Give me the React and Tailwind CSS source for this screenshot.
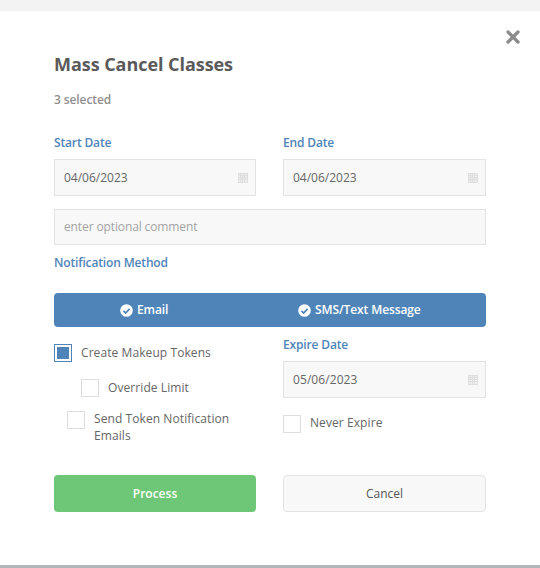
import { X } from 'lucide-react';

const CalIcon = () => (
    <svg width="10" height="10" viewBox="0 0 10 10" className="shrink-0" fill="#f0f0f0" stroke="#dedede" strokeWidth="1" shapeRendering="crispEdges">
        <rect x="0.5" y="0.5" width="9" height="9" />
        <path d="M2.5 0v10M4.5 0v10M6.5 0v10M0 2.5h10M0 4.5h10M0 6.5h10" fill="none" />
    </svg>
);

const CheckCircle = () => (
    <svg width="13" height="13" viewBox="0 0 13 13" className="shrink-0">
        <circle cx="6.5" cy="6.5" r="6.3" fill="#ffffff" />
        <path d="M3.4 6.8l2.2 2.2 4-4.2" fill="none" stroke="#4f84b8" strokeWidth="1.7" />
    </svg>
);

const DateField = ({ value }) => (
    <div className="flex items-center justify-between h-[37px] bg-[#f8f8f8] border border-[#e3e3e3] pl-[9px] pr-[7px] text-[12px] text-[#666666]">
        <span>{value}</span>
        <CalIcon />
    </div>
);

const Label = ({ children, className = '' }) => (
    <label className={`block text-[12px] leading-[16px] font-semibold tracking-[-0.15px] text-[#4f84b8] ${className}`}>{children}</label>
);

const Box = () => <span className="block shrink-0 w-[18px] h-[18px] bg-white border border-[#dddddd]" />;

const App = () => {
    return (
        <div className="w-[540px] h-[568px] flex flex-col overflow-hidden bg-white" style={{ fontFamily: '"Open Sans", sans-serif' }}>
            <div className="h-[11px] shrink-0 bg-[#f3f3f3]" />

            <div className="flex-1 px-[54px]">
                <div className="relative">
                    <button className="absolute right-[-37px] top-[16px] text-[#8c8c8c]">
                        <X className="w-[20px] h-[20px]" strokeWidth={4} />
                    </button>
                </div>

                <h1 className="pt-[41px] text-[18px] leading-[24px] font-bold tracking-[-0.05px] text-[#5a5a5a]">Mass Cancel Classes</h1>
                <p className="mt-[16px] text-[12px] leading-[16px] font-semibold tracking-[-0.1px] text-[#8f8f8f]">3 selected</p>

                <div className="grid grid-cols-[202px_203px] gap-x-[27px] mt-[27px]">
                    <div>
                        <Label className="mb-[8px]">Start Date</Label>
                        <DateField value="04/06/2023" />
                    </div>
                    <div>
                        <Label className="mb-[8px]">End Date</Label>
                        <DateField value="04/06/2023" />
                    </div>
                </div>

                <div className="flex items-center h-[36px] mt-[13px] bg-[#f8f8f8] border border-[#e3e3e3] pl-[9px] text-[12px] tracking-[-0.12px] text-[#a3a3a3]">
                    enter optional comment
                </div>

                <Label className="mt-[10px]">Notification Method</Label>

                <div className="grid grid-cols-[202px_203px] gap-x-[27px] items-center h-[34px] mt-[22px] rounded-[4px] bg-[#4f84b8] text-[12px] font-semibold tracking-[-0.1px] text-white">
                    <div className="flex items-center gap-[4px] pl-[66px]">
                        <CheckCircle />
                        <span>Email</span>
                    </div>
                    <div className="flex items-center gap-[4px] pl-[15px]">
                        <CheckCircle />
                        <span>SMS/Text Message</span>
                    </div>
                </div>

                <div className="grid grid-cols-[202px_203px] gap-x-[27px] mt-[9px] text-[12px] tracking-[0.08px] text-[#666666]">
                    <div className="pt-[8px]">
                        <div className="flex items-center gap-[9px]">
                            <span className="flex items-center justify-center shrink-0 w-[18px] h-[18px] bg-white border border-[#4f84b8]">
                                <span className="block w-[12px] h-[12px] bg-[#4f84b8]" />
                            </span>
                            <span className="leading-[16px]">Create Makeup Tokens</span>
                        </div>
                        <div className="flex items-center gap-[9px] mt-[17px] ml-[27px]">
                            <Box />
                            <span>Override Limit</span>
                        </div>
                        <div className="flex items-start gap-[9px] mt-[14px] ml-[13px]">
                            <Box />
                            <span className="leading-[17px] w-[150px] -mt-[1px]">Send Token Notification Emails</span>
                        </div>
                    </div>
                    <div>
                        <Label className="mt-[1px] mb-[8px]">Expire Date</Label>
                        <DateField value="05/06/2023" />
                        <div className="flex items-center gap-[9px] mt-[17px]">
                            <Box />
                            <span className="leading-[16px] pb-[2px]">Never Expire</span>
                        </div>
                    </div>
                </div>

                <div className="grid grid-cols-[202px_203px] gap-x-[27px] mt-[31px] text-[12px]">
                    <button className="h-[37px] rounded-[4px] bg-[#6ec776] font-semibold text-white">Process</button>
                    <button className="h-[37px] rounded-[4px] bg-[#f8f8f8] border border-[#e3e3e3] text-[#555555]">Cancel</button>
                </div>
            </div>

            <div className="h-[3px] shrink-0 bg-[#b3b5b7]" />
        </div>
    );
};

export default App;
